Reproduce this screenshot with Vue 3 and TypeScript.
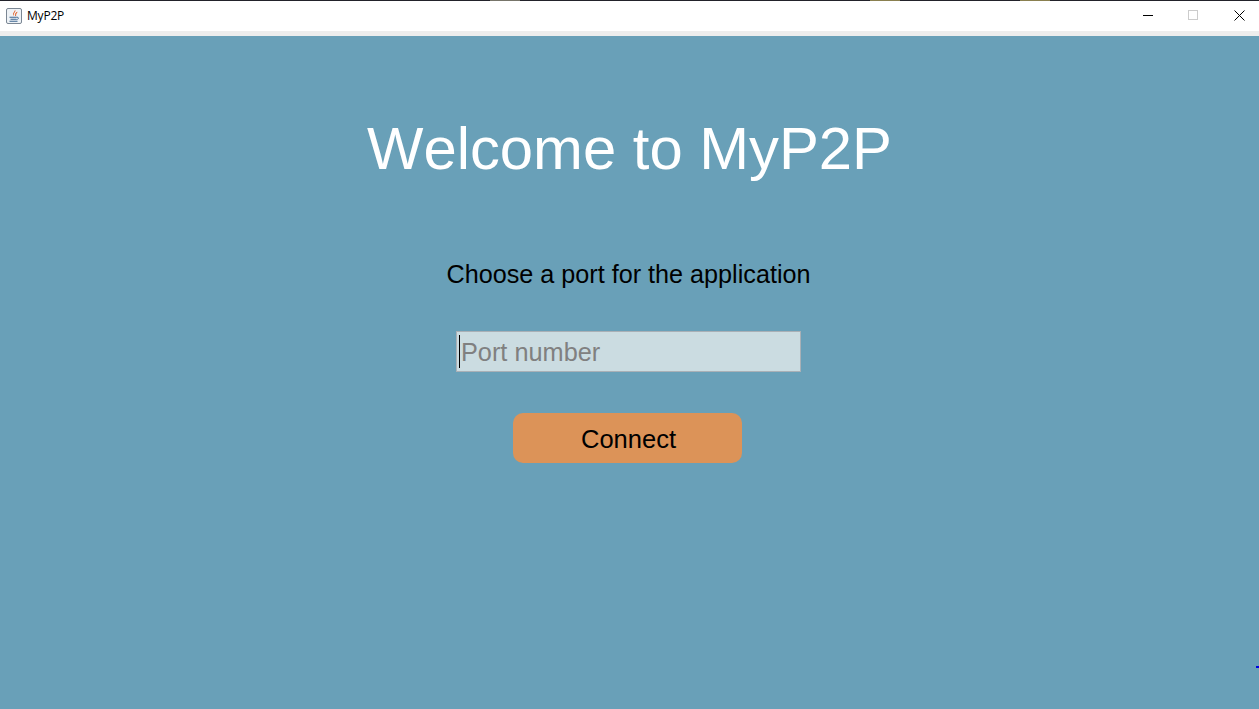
<script setup lang="ts">
const title = 'MyP2P'
</script>

<template>
  <div class="window">
    <div class="topline"></div>
    <header class="titlebar">
      <div class="brand">
        <svg class="javaicon" width="16" height="16" viewBox="0 0 16 16">
          <rect x="0.5" y="0.5" width="15" height="15" rx="1.5" fill="#eef2f6" stroke="#7b8794" />
          <path d="M9 1.8C10.6 4 6.6 5 8 8C5.4 6.2 8.6 4.2 9 1.8Z" fill="#e0591f" />
          <path d="M11.2 4C9.6 5 9 6.2 9.6 8C9.6 6.4 10.2 5.2 11.2 4Z" fill="#e0591f" stroke="#e0591f" stroke-width="0.6" />
          <path d="M3.5 9.2H10.8M4.5 11.2H10.5M3.5 13.2H11.5" stroke="#3c6690" stroke-width="1.1" fill="none" />
          <path d="M10.8 9.2C13.2 9 13.2 11 10.5 11.6" stroke="#3c6690" stroke-width="0.9" fill="none" />
        </svg>
        <span class="apptitle">{{ title }}</span>
      </div>
      <div class="controls">
        <svg width="10" height="10" viewBox="0 0 10 10"><path d="M0 5.5H10" stroke="#000" /></svg>
        <svg width="10" height="10" viewBox="0 0 10 10"><rect x="0.5" y="0.5" width="9" height="9" fill="none" stroke="#ccc" /></svg>
        <svg class="close" width="11" height="11" viewBox="0 0 11 11"><path d="M0.5 0.5L10.5 10.5M10.5 0.5L0.5 10.5" stroke="#000" /></svg>
      </div>
    </header>
    <div class="strip"></div>
    <main class="content">
      <h1 class="welcome">Welcome to MyP2P</h1>
      <p class="prompt">Choose a port for the application</p>
      <div class="field">
        <span class="caret"></span>
        <input class="port" type="text" placeholder="Port number" />
      </div>
      <button class="connect" type="button">Connect</button>
      <span class="speck"></span>
    </main>
  </div>
</template>

<style>
html, body { margin: 0; padding: 0; overflow: hidden; }
</style>

<style scoped>
.window {
  width: 1259px;
  height: 709px;
  display: flex;
  flex-direction: column;
  font-family: "Liberation Sans", Arial, sans-serif;
  background: #69a0b8;
  overflow: hidden;
}
.topline {
  height: 1px;
  background: linear-gradient(90deg,
    #22222a 490px, #77756a 490px, #77756a 520px,
    #22222a 520px, #22222a 870px, #8a8050 870px, #8a8050 900px,
    #22222a 900px, #22222a 1020px, #8a8050 1020px, #8a8050 1050px,
    #22222a 1050px);
}
.titlebar {
  height: 30px;
  background: #fff;
  display: flex;
  align-items: center;
  justify-content: space-between;
}
.brand { display: flex; align-items: center; gap: 5px; padding-left: 6px; }
.javaicon { display: block; }
.apptitle { font-family: "Open Sans", "Noto Sans", sans-serif; font-size: 12px; letter-spacing: -0.2px; color: #000; margin-top: -1px; }
.controls {
  display: flex;
  align-items: center;
  gap: 35px;
  padding-right: 14px;
  margin-top: -2px;
}
.controls svg { display: block; }
.controls .close { margin-left: 1px; }
.strip { height: 5px; background: #ededed; }
.content {
  position: relative;
  flex: 1;
  display: flex;
  flex-direction: column;
  align-items: center;
}
.welcome {
  margin: 77px 0 0;
  font-size: 59.8px;
  line-height: 72px;
  font-weight: 400;
  font-kerning: none;
  color: #fff;
}
.prompt {
  margin: 75px 2px 0 0;
  font-size: 25.2px;
  line-height: 28px;
  color: #000;
}
.field {
  position: relative;
  margin: 43px 2px 0 0;
  width: 345px;
  height: 41px;
}
.port {
  width: 100%;
  height: 100%;
  box-sizing: border-box;
  border: 1px solid #a9b0b6;
  background: #cbdce1;
  padding: 2px 4px 0;
  font-family: inherit;
  font-size: 25.3px;
  outline: none;
  border-radius: 0;
}
.port::placeholder { color: #808080; opacity: 1; }
.caret {
  position: absolute;
  left: 3px;
  top: 4px;
  width: 1px;
  height: 33px;
  background: #000;
}
.connect {
  margin: 41px 4px 0 0;
  width: 229px;
  height: 50px;
  border: none;
  border-radius: 10px;
  background: #dc9358;
  color: #000;
  font-family: inherit;
  font-size: 25.5px;
  padding: 2px 0 0 2px;
}
.speck {
  position: absolute;
  right: 0;
  top: 630px;
  width: 3px;
  height: 2px;
  background: #0000e0;
}
</style>
